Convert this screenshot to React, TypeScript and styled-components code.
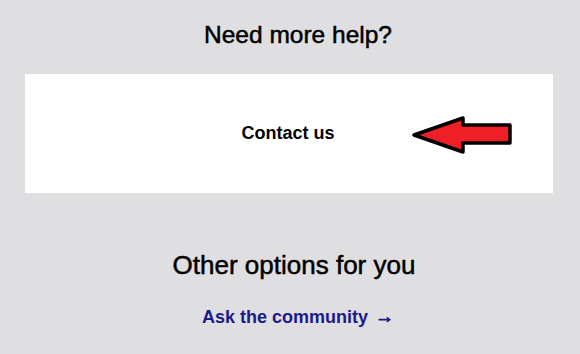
import React from "react";
import styled, { createGlobalStyle } from "styled-components";

const Global = createGlobalStyle`
  html, body { margin: 0; padding: 0; background: #dfdfe1; }
  body { font-family: "Liberation Sans", Arial, sans-serif; }
`;

const Page = styled.main`
  width: 580px;
  height: 354px;
  display: flex;
  flex-direction: column;
  align-items: flex-start;
  box-sizing: border-box;
  padding-top: 21px;
  overflow: hidden;
`;

const Heading = styled.h2<{ $size: number; $mt: number; $shift: number }>`
  align-self: stretch;
  margin: ${(p) => p.$mt}px 0 0;
  padding-left: ${(p) => p.$shift}px;
  text-align: center;
  font-size: ${(p) => p.$size}px;
  line-height: 28px;
  font-weight: 400;
  color: #000;
  -webkit-text-stroke: 0.5px #000;
`;

const Card = styled.section`
  position: relative;
  margin: 25px 0 0 25px;
  width: 528px;
  height: 119px;
  background: #fff;
  display: flex;
  align-items: center;
  justify-content: center;
`;

const ContactLink = styled.a`
  font-size: 18px;
  font-weight: 700;
  color: #000;
  text-decoration: none;
  margin-left: -2px;
`;

const Pointer = styled.svg`
  position: absolute;
  left: 386px;
  top: 41px;
`;

const CommunityLink = styled.a`
  align-self: stretch;
  margin-top: 27px;
  padding-left: 16px;
  text-align: center;
  font-size: 18px;
  line-height: 22px;
  font-weight: 700;
  color: #1b1a8a;
  text-decoration: none;
`;

const LinkArrow = styled.span`
  margin-left: 2px;
  font-size: 19px;
  -webkit-text-stroke: 0.8px #1b1a8a;
`;

export default function App() {
  return (
    <>
      <Global />
      <Page>
        <Heading $size={24.5} $mt={0} $shift={16}>Need more help?</Heading>
        <Card>
          <ContactLink href="#">Contact us</ContactLink>
          <Pointer width="104" height="42" viewBox="0 0 104 42">
            <polygon
              points="3,20 52,3 52,10 99,10 99,28 52,28 52,37"
              fill="#ee1f26"
              stroke="#000"
              strokeWidth="3.5"
              strokeLinejoin="round"
            />
          </Pointer>
        </Card>
        <Heading $size={26} $mt={58} $shift={8}>Other options for you</Heading>
        <CommunityLink href="#">
          Ask the community <LinkArrow>&rarr;</LinkArrow>
        </CommunityLink>
      </Page>
    </>
  );
}
